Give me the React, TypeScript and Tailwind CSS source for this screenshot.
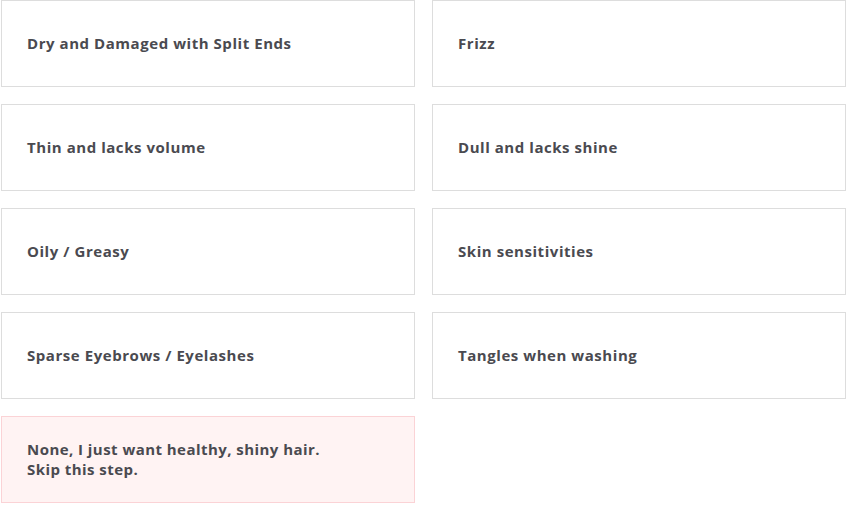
const options = [
  "Dry and Damaged with Split Ends",
  "Frizz",
  "Thin and lacks volume",
  "Dull and lacks shine",
  "Oily / Greasy",
  "Skin sensitivities",
  "Sparse Eyebrows / Eyelashes",
  "Tangles when washing",
];

export default function App() {
  return (
    <div className="w-[848px] h-[505px] bg-white pl-[1px] font-['Open_Sans',sans-serif]">
      <div className="grid grid-cols-[414px_414px] gap-[17px]">
        {options.map((label) => (
          <div
            key={label}
            className="h-[87px] border border-[#dddddd] bg-white flex items-center pl-[25px] pr-[26px] text-[15px] font-bold tracking-[0.55px] text-[#4a4a50]"
          >
            {label}
          </div>
        ))}
        <div className="h-[87px] border border-[#fbd3d6] bg-[#fff3f3] flex items-center pl-[25px] pr-[26px] pb-[1px] text-[15px] font-bold tracking-[0.45px] text-[#4a4a50] leading-[20px]">
          <span>
            None, I just want healthy, shiny hair.
            <br />
            Skip this step.
          </span>
        </div>
      </div>
    </div>
  );
}
